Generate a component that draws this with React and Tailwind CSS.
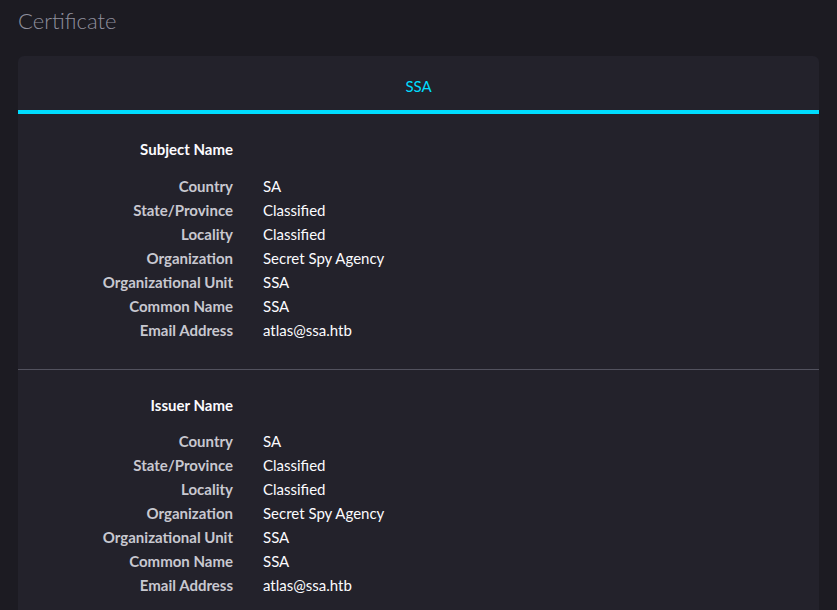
import React from 'react';

const fields = [
    ['Country', 'SA'],
    ['State/Province', 'Classified'],
    ['Locality', 'Classified'],
    ['Organization', 'Secret Spy Agency'],
    ['Organizational Unit', 'SSA'],
    ['Common Name', 'SSA'],
    ['Email Address', 'atlas@ssa.htb'],
];

const NameSection = ({ title, last }) => (
    <div className={`pt-[23px] pb-[27px] ${last ? '' : 'border-b border-[#52525e]'}`}>
        <div className="grid grid-cols-[215px_1fr] gap-x-[30px] text-[15px] leading-6">
            <div className={`text-right font-bold text-[#fbfbfe] ${last ? 'mb-3' : 'mb-[13px]'}`}>{title}</div>
            <div></div>
            {fields.map(([label, value]) => (
                <React.Fragment key={label}>
                    <div className="text-right font-bold text-[#c8c8d0]">{label}</div>
                    <div className="text-[#fbfbfe]">{value}</div>
                </React.Fragment>
            ))}
        </div>
    </div>
);

const App = () => {
    return (
        <div
            className="min-h-[610px] bg-[#1c1b22] px-[18px] overflow-hidden"
            style={{ fontFamily: '"Lato", "Noto Sans", sans-serif' }}
        >
            <h1 className="pt-[5px] h-[56px] text-[22px] font-light text-[#8f8f9d] leading-8">Certificate</h1>
            <div className="bg-[#23222b] rounded-t-md">
                <div className="h-[58px] pt-[6px] flex items-center justify-center border-b-4 border-[#00ddff]">
                    <span className="text-[15px] text-[#00ddff]">SSA</span>
                </div>
                <NameSection title="Subject Name" />
                <NameSection title="Issuer Name" last />
            </div>
        </div>
    );
};

export default App;
